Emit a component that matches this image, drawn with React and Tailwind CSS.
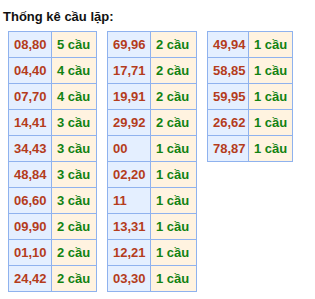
const columns = [
  {
    widths: ["w-[43px]", "w-[45px]"],
    rows: [
      ["08,80", 5],
      ["04,40", 4],
      ["07,70", 4],
      ["14,41", 3],
      ["34,43", 3],
      ["48,84", 3],
      ["06,60", 3],
      ["09,90", 2],
      ["01,10", 2],
      ["24,42", 2],
    ],
  },
  {
    widths: ["w-[43px]", "w-[46px]"],
    rows: [
      ["69,96", 2],
      ["17,71", 2],
      ["19,91", 2],
      ["29,92", 2],
      ["00", 1],
      ["02,20", 1],
      ["11", 1],
      ["13,31", 1],
      ["12,21", 1],
      ["03,30", 1],
    ],
  },
  {
    widths: ["w-[41px]", "w-[44px]"],
    rows: [
      ["49,94", 1],
      ["58,85", 1],
      ["59,95", 1],
      ["26,62", 1],
      ["78,87", 1],
    ],
  },
];

const CauTable = ({ widths, rows }) => (
  <table className="border-collapse">
    <tbody>
      {rows.map(([pair, count]) => (
        <tr key={pair}>
          <td
            className={`${widths[0]} h-[26px] border border-[#8fb2ee] bg-[#e4efff] pl-[5px] text-[#b43c1c] font-bold`}
          >
            {pair}
          </td>
          <td
            className={`${widths[1]} h-[26px] border border-[#8fb2ee] bg-[#fff3e0] pl-[5px] text-[#128212] font-bold`}
          >
            {count} cầu
          </td>
        </tr>
      ))}
    </tbody>
  </table>
);

export default function App() {
  return (
    <div className="w-[315px] h-[299px] bg-white font-['Liberation_Sans',Arial,sans-serif] text-[13px] leading-[15px]">
      <h3 className="pt-[9px] pl-[3px] font-bold text-[13px] leading-[16px] text-[#111]">
        Thống kê cầu lặp:
      </h3>
      <div className="flex items-start gap-[10px] pl-[8px] mt-[6px]">
        {columns.map((col, i) => (
          <CauTable key={i} widths={col.widths} rows={col.rows} />
        ))}
      </div>
    </div>
  );
}
